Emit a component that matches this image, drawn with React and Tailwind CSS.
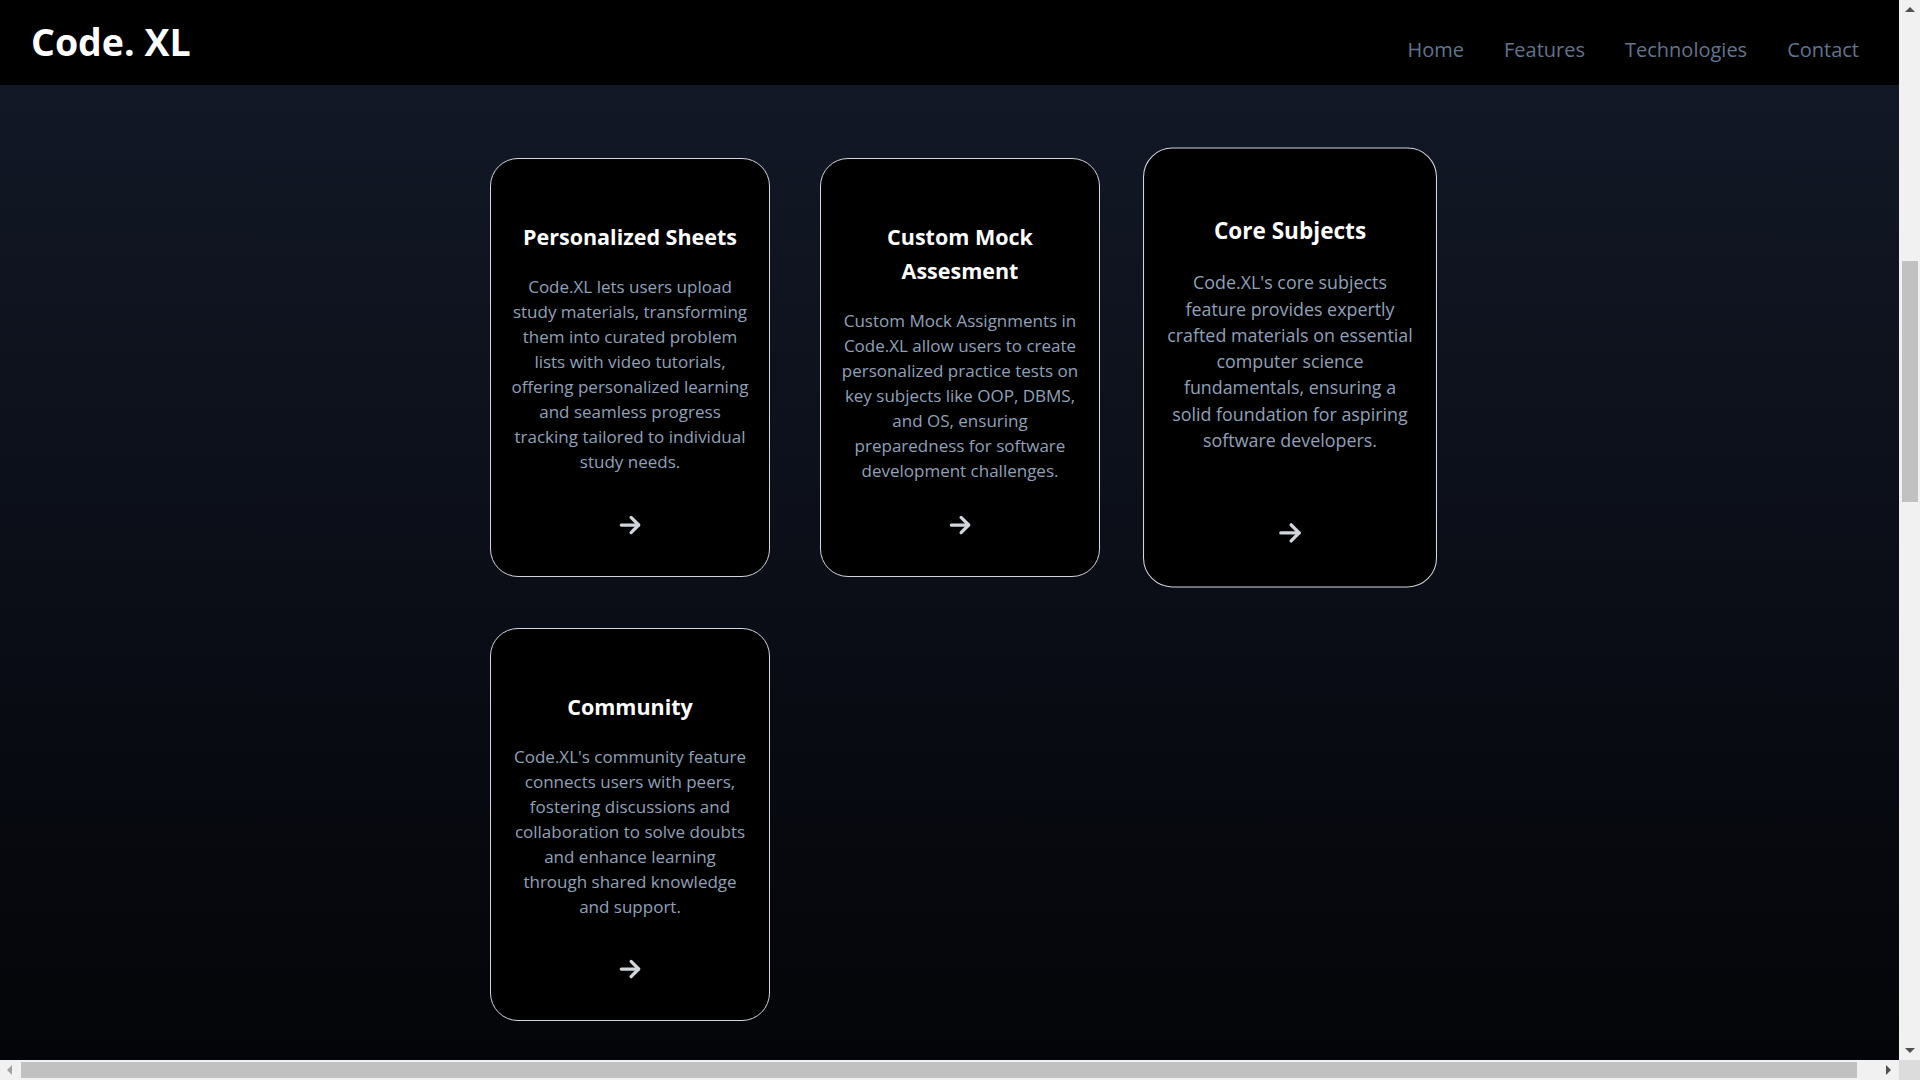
import clsx from 'clsx';

const features = [
  {
    title: 'Personalized Sheets',
    text: 'Code.XL lets users upload study materials, transforming them into curated problem lists with video tutorials, offering personalized learning and seamless progress tracking tailored to individual study needs.',
  },
  {
    title: 'Custom Mock Assesment',
    text: 'Custom Mock Assignments in Code.XL allow users to create personalized practice tests on key subjects like OOP, DBMS, and OS, ensuring preparedness for software development challenges.',
  },
  {
    title: 'Core Subjects',
    text: "Code.XL's core subjects feature provides expertly crafted materials on essential computer science fundamentals, ensuring a solid foundation for aspiring software developers.",
    active: true,
  },
  {
    title: 'Community',
    text: "Code.XL's community feature connects users with peers, fostering discussions and collaboration to solve doubts and enhance learning through shared knowledge and support.",
  },
];

const navLinks = ['Home', 'Features', 'Technologies', 'Contact'];

const ArrowIcon = () => (
  <svg width="26" height="26" viewBox="0 0 24 24" fill="none" stroke="currentColor" strokeWidth="3" strokeLinecap="round" strokeLinejoin="round">
    <path d="M4 12h16" />
    <path d="M13 5l7 7-7 7" />
  </svg>
);

const FeatureCard = ({ title, text, active }) => (
  <div
    className={clsx(
      'flex flex-col items-center rounded-[28px] border border-gray-300 bg-black px-5 pt-[61px] pb-[38px] text-center transition',
      active && 'scale-105'
    )}
  >
    <h3 className="text-[21.5px] font-bold leading-[34px] text-white">{title}</h3>
    <p className="mt-5 text-[17px] leading-[25px] text-slate-400">{text}</p>
    <div className="mt-auto h-[26px] text-gray-300">
      <ArrowIcon />
    </div>
  </div>
);

const App = () => {
  return (
    <div className="relative h-screen w-full overflow-hidden bg-black font-['Open_Sans',sans-serif]">
      {/* Navbar */}
      <header className="flex h-[85px] items-start justify-between bg-black pl-[31px] pr-[61px]">
        <h1 className="mt-[16px] text-[37.5px] font-bold leading-[52px] text-white">Code. XL</h1>
        <nav className="mt-[35px] flex gap-10">
          {navLinks.map((link) => (
            <a key={link} href="#" className="text-[20px] leading-[30px] text-slate-500">
              {link}
            </a>
          ))}
        </nav>
      </header>

      {/* Features */}
      <main className="h-[calc(100vh-85px)] bg-gradient-to-b from-[#121826] via-[#0b0e17] to-[#040508] pt-[73px]">
        <div className="grid grid-cols-[repeat(3,280px)] grid-rows-[419px_393px] justify-center gap-x-[50px] gap-y-[51px]">
          {features.map((f) => (
            <FeatureCard key={f.title} {...f} />
          ))}
        </div>
      </main>

      {/* Browser scrollbars */}
      <div className="absolute right-0 top-0 flex h-[1060px] w-[21px] flex-col items-center bg-[#f1f1f1]">
        <div className="mt-[7px] h-0 w-0 border-x-[5px] border-b-[5px] border-x-transparent border-b-[#505050]" />
        <div className="mt-[249px] h-[241px] w-[16px] bg-[#c1c1c1]" />
        <div className="mb-[7px] mt-auto h-0 w-0 border-x-[5px] border-t-[5px] border-x-transparent border-t-[#505050]" />
      </div>
      <div className="absolute bottom-0 left-0 flex h-[20px] w-full items-center bg-[#f1f1f1]">
        <div className="ml-[7px] h-0 w-0 border-y-[5px] border-r-[5px] border-y-transparent border-r-[#a3a3a3]" />
        <div className="ml-[9px] h-[16px] w-[1836px] bg-[#c1c1c1]" />
        <div className="ml-auto mr-[8px] h-0 w-0 border-y-[5px] border-l-[5px] border-y-transparent border-l-[#505050]" />
        <div className="h-full w-[21px] bg-[#dcdcdc]" />
      </div>
    </div>
  );
};

export default App;
